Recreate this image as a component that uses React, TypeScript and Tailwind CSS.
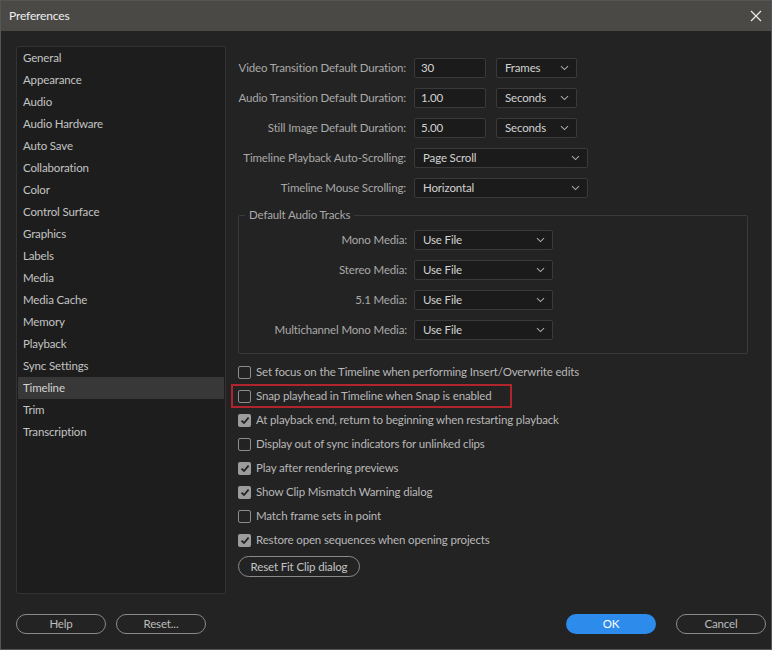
import React from 'react';

const categories = [
  'General', 'Appearance', 'Audio', 'Audio Hardware', 'Auto Save', 'Collaboration', 'Color',
  'Control Surface', 'Graphics', 'Labels', 'Media', 'Media Cache', 'Memory', 'Playback',
  'Sync Settings', 'Timeline', 'Trim', 'Transcription',
];

const durations = [
  { label: 'Video Transition Default Duration:', value: '30', unit: 'Frames' },
  { label: 'Audio Transition Default Duration:', value: '1.00', unit: 'Seconds' },
  { label: 'Still Image Default Duration:', value: '5.00', unit: 'Seconds' },
];

const audioTracks = ['Mono Media:', 'Stereo Media:', '5.1 Media:', 'Multichannel Mono Media:'];

const options = [
  { text: 'Set focus on the Timeline when performing Insert/Overwrite edits', checked: false },
  { text: 'Snap playhead in Timeline when Snap is enabled', checked: false, highlight: true },
  { text: 'At playback end, return to beginning when restarting playback', checked: true },
  { text: 'Display out of sync indicators for unlinked clips', checked: false },
  { text: 'Play after rendering previews', checked: true },
  { text: 'Show Clip Mismatch Warning dialog', checked: true },
  { text: 'Match frame sets in point', checked: false },
  { text: 'Restore open sequences when opening projects', checked: true },
];

const Chevron = () => (
  <svg width="9" height="6" viewBox="0 0 9 6" fill="none" className="shrink-0">
    <path d="M1 1.2 L4.5 4.6 L8 1.2" stroke="#a8a8a8" strokeWidth="1.1" />
  </svg>
);

const Dropdown = ({ value, width }: { value: string; width: string }) => (
  <div className={`${width} h-[20px] flex items-center justify-between pl-[8px] pr-[7px] bg-[#1b1b1b] border border-[#3a3a3a] rounded-[2px] text-[#d2d2d2]`}>
    <span>{value}</span>
    <Chevron />
  </div>
);

const Checkbox = ({ checked }: { checked: boolean }) =>
  checked ? (
    <div className="w-[13px] h-[13px] rounded-[2px] bg-[#9c9c9c] flex items-center justify-center shrink-0">
      <svg width="10" height="9" viewBox="0 0 10 9" fill="none">
        <path d="M1.5 4.6 L4 7 L8.6 1.6" stroke="#232323" strokeWidth="1.8" />
      </svg>
    </div>
  ) : (
    <div className="w-[13px] h-[13px] rounded-[2px] border border-[#8c8c8c] shrink-0" />
  );

const FooterButton = ({ label, primary }: { label: string; primary?: boolean }) => (
  <button
    className={
      primary
        ? 'w-[90px] h-[20px] rounded-full bg-[#2d8ceb] text-white flex items-center justify-center'
        : 'w-[90px] h-[20px] rounded-full border border-[#8a8a8a] text-[#bdbdbd] flex items-center justify-center'
    }
  >
    {label}
  </button>
);

const App: React.FC = () => {
  return (
    <div className="w-[772px] h-[650px] bg-[#232323] border border-[#555] flex flex-col text-[11.5px] tracking-[-0.15px] leading-[16px] whitespace-nowrap font-['Lato','Noto_Sans',sans-serif] overflow-hidden">
      {/* Title bar */}
      <div className="h-[30px] bg-[#4a4946] flex items-center justify-between pl-[8px] pr-[9px] shrink-0">
        <span className="text-[#f0f0f0] text-[12px]">Preferences</span>
        <svg width="12" height="12" viewBox="0 0 12 12" fill="none">
          <path d="M1 1 L11 11 M11 1 L1 11" stroke="#e8e8e8" strokeWidth="1.3" />
        </svg>
      </div>

      {/* Body */}
      <div className="flex pt-[15px] pl-[15px]">
        {/* Category list */}
        <div className="w-[210px] h-[548px] bg-[#1d1d1d] border border-[#333] rounded-[2px] px-[1px] shrink-0">
          {categories.map(c => (
            <div
              key={c}
              className={`h-[22px] flex items-center pl-[5px] ${c === 'Timeline' ? 'bg-[#383838] text-[#d4d4d4]' : 'text-[#c4c4c4]'}`}
            >
              {c}
            </div>
          ))}
        </div>

        {/* Timeline settings */}
        <div className="flex flex-col pt-[12px]">
          <div className="flex flex-col gap-[10px]">
            {durations.map(d => (
              <div key={d.label} className="flex items-center h-[20px]">
                <span className="w-[181px] text-right pr-[1px] text-[#a9a9a9]">{d.label}</span>
                <div className="ml-[7px] w-[72px] h-[20px] flex items-center pl-[6px] bg-[#1b1b1b] border border-[#3a3a3a] rounded-[2px] text-[#d2d2d2]">
                  {d.value}
                </div>
                <div className="ml-[10px]">
                  <Dropdown value={d.unit} width="w-[81px]" />
                </div>
              </div>
            ))}
            {[
              ['Timeline Playback Auto-Scrolling:', 'Page Scroll'],
              ['Timeline Mouse Scrolling:', 'Horizontal'],
            ].map(([label, value]) => (
              <div key={label} className="flex items-center h-[20px]">
                <span className="w-[181px] text-right pr-[1px] text-[#a9a9a9]">{label}</span>
                <div className="ml-[7px]">
                  <Dropdown value={value} width="w-[174px]" />
                </div>
              </div>
            ))}
          </div>

          {/* Default Audio Tracks */}
          <fieldset className="ml-[12px] mt-[9px] w-[510px] border border-[#3a3a3a] rounded-[2px] pb-[13px] pt-[7px] px-0">
            <legend className="ml-[6px] px-[4px] text-[#a9a9a9]">Default Audio Tracks</legend>
            <div className="flex flex-col gap-[10px]">
              {audioTracks.map(t => (
                <div key={t} className="flex items-center h-[20px]">
                  <span className="w-[168px] text-right text-[#a9a9a9]">{t}</span>
                  <div className="ml-[7px]">
                    <Dropdown value="Use File" width="w-[139px]" />
                  </div>
                </div>
              ))}
            </div>
          </fieldset>

          {/* Options */}
          <div className="flex flex-col mt-[6px] ml-[12px]">
            {options.map(o => (
              <div
                key={o.text}
                className={
                  o.highlight
                    ? 'h-[24px] w-[281px] -ml-[7px] pl-[5px] flex items-center gap-[5px] border-2 border-[#b0242b] text-[#b8b8b8]'
                    : 'h-[24px] flex items-center gap-[5px] text-[#b8b8b8]'
                }
              >
                <Checkbox checked={o.checked} />
                <span>{o.text}</span>
              </div>
            ))}
            <button className="mt-[4px] w-[122px] h-[21px] rounded-full border border-[#8a8a8a] text-[#c4c4c4] flex items-center justify-center">
              Reset Fit Clip dialog
            </button>
          </div>
        </div>
      </div>

      {/* Footer */}
      <div className="flex items-center justify-between pl-[15px] pr-[5px] mt-[20px]">
        <div className="flex gap-[10px]">
          <FooterButton label="Help" />
          <FooterButton label="Reset..." />
        </div>
        <div className="flex gap-[20px]">
          <FooterButton label="OK" primary />
          <FooterButton label="Cancel" />
        </div>
      </div>
    </div>
  );
};

export default App;
